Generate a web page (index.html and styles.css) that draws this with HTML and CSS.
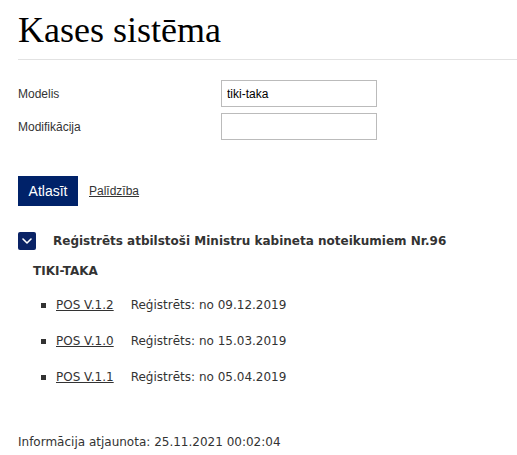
FILE: index.html
```html
<!DOCTYPE html>
<html lang="lv">
<head>
<meta charset="utf-8">
<title>Kases sistēma</title>
<link rel="stylesheet" href="styles.css">
</head>
<body>
<div class="page">
  <h1 class="title">Kases sistēma</h1>
  <form class="search">
    <div class="field">
      <label class="field-label" for="modelis">Modelis</label>
      <input class="field-input" id="modelis" type="text" value="tiki-taka">
    </div>
    <div class="field">
      <label class="field-label" for="modif">Modifikācija</label>
      <input class="field-input" id="modif" type="text" value="">
    </div>
    <div class="actions">
      <button class="btn" type="button">Atlasīt</button>
      <a class="help" href="#">Palīdzība</a>
    </div>
  </form>

  <section class="group">
    <div class="group-head">
      <span class="toggle">
        <svg width="10" height="6" viewBox="0 0 10 6"><path d="M1 1l4 4 4-4" fill="none" stroke="#fff" stroke-width="1.6" stroke-linecap="round" stroke-linejoin="round"/></svg>
      </span>
      <span class="group-title">Reģistrēts atbilstoši Ministru kabineta noteikumiem Nr.96</span>
    </div>
    <div class="model">TIKI-TAKA</div>
    <ul class="versions">
      <li><a href="#">POS V.1.2</a><span class="reg">Reģistrēts: no 09.12.2019</span></li>
      <li><a href="#">POS V.1.0</a><span class="reg">Reģistrēts: no 15.03.2019</span></li>
      <li><a href="#">POS V.1.1</a><span class="reg">Reģistrēts: no 05.04.2019</span></li>
    </ul>
  </section>

  <p class="updated">Informācija atjaunota: 25.11.2021 00:02:04</p>
</div>
</body>
</html>
```
FILE: styles.css
```css
html, body {
  margin: 0;
  padding: 0;
  background: #fff;
}

.page {
  padding: 0 0 0 18px;
  color: #333;
  font-family: "DejaVu Sans", Verdana, sans-serif;
}

.title {
  margin: 0;
  padding-top: 11px;
  padding-bottom: 10px;
  font-family: "Liberation Serif", "Times New Roman", serif;
  font-weight: normal;
  font-size: 36px;
  line-height: 38px;
  color: #000;
  border-bottom: 1px solid #e2e2e2;
}

.search {
  margin-top: 20px;
}

.field {
  display: flex;
  align-items: center;
  height: 27px;
  margin-bottom: 6px;
}

.field-label {
  width: 203px;
  font-family: "Liberation Sans", Arial, sans-serif;
  font-size: 12px;
  color: #333;
}

.field-input {
  box-sizing: border-box;
  width: 156px;
  height: 27px;
  margin: 0;
  padding: 0 5px;
  border: 1px solid #bbb;
  font-family: "Liberation Sans", Arial, sans-serif;
  font-size: 12px;
  color: #000;
  outline: none;
}

.actions {
  display: flex;
  align-items: center;
  gap: 11px;
  margin-top: 36px;
}

.btn {
  width: 60px;
  height: 30px;
  border: 0;
  margin: 0;
  padding: 0;
  background: #002269;
  color: #fff;
  font-family: "Liberation Sans", Arial, sans-serif;
  font-size: 14px;
}

.help {
  font-family: "Liberation Sans", Arial, sans-serif;
  font-size: 12px;
  color: #333;
}

.group {
  margin-top: 26px;
}

.group-head {
  display: flex;
  align-items: center;
  gap: 17px;
}

.toggle {
  display: flex;
  align-items: center;
  justify-content: center;
  width: 18px;
  height: 18px;
  border-radius: 2px;
  background: #0a2366;
}

.group-title {
  font-weight: bold;
  font-size: 12px;
  color: #333;
}

.model {
  margin: 14px 0 0 15px;
  font-weight: bold;
  font-size: 12px;
  color: #333;
}

.versions {
  list-style: none;
  margin: 9px 0 0 0;
  padding: 0 0 0 23px;
}

.versions li {
  display: flex;
  align-items: center;
  height: 36px;
  font-size: 12px;
}

.versions li::before {
  content: "";
  width: 5px;
  height: 5px;
  margin-right: 10px;
  background: #333;
}

.versions a {
  color: #333;
  margin-right: 17px;
}

.reg {
  color: #333;
}

.updated {
  margin: 40px 0 0 0;
  font-size: 12px;
  color: #333;
}
```
